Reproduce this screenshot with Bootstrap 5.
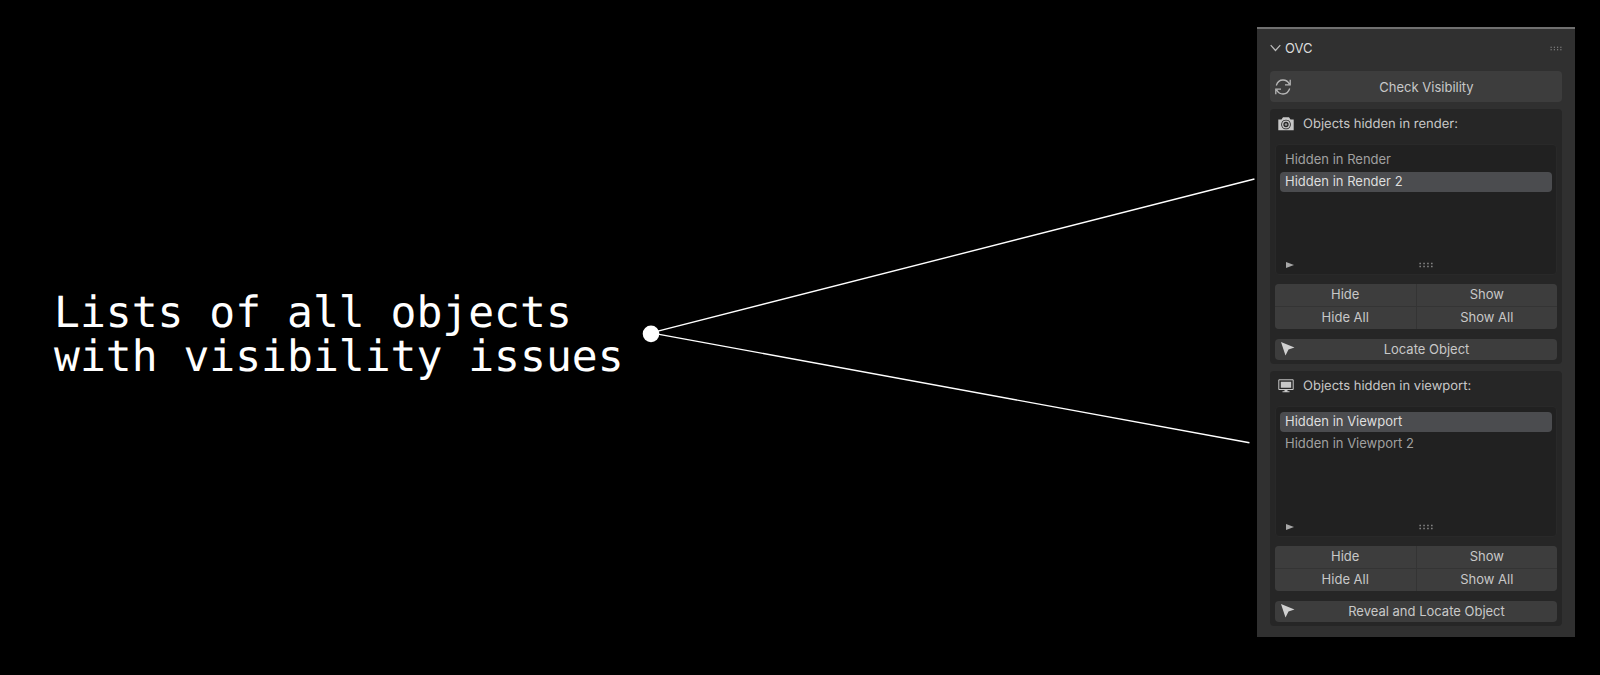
<!DOCTYPE html>
<html lang="en">
<head>
<meta charset="utf-8">
<meta name="viewport" content="width=device-width, initial-scale=1">
<title>OVC – Object Visibility Checker</title>
<link href="https://cdn.jsdelivr.net/npm/bootstrap@5.3.0/dist/css/bootstrap.min.css" rel="stylesheet">
<style>
  body { background: #000; color: #c8c8c8; font-family: Inter, "Liberation Sans", sans-serif; font-size: 13px; line-height: 20px; text-rendering: geometricPrecision; }
  .stage { padding: 27px 25px 38px 54px; }
  .headline { font-family: "DejaVu Sans Mono", monospace; font-size: 43px; line-height: 44px; color: #fff; padding-top: 6px; margin-right: 18px; }
  .pointer { min-width: 0; }
  .pointer svg { width: 100%; height: auto; }
  .ovc { width: 318px; background: #303030; border-top: 2px solid #707070; padding: 8px 13px 11px; }
  .ovc-head { height: 22px; margin-bottom: 12px; font-size: 13px; color: #dcdcdc; }
  .ovc-head button { color: inherit; font-size: inherit; line-height: inherit; gap: 4px; }
  .ovc .tool { background: #3d3d3d; color: #c8c8c8; border: 0; border-radius: 4px; padding: 0 0 1px; font-size: 13px; line-height: 20px; height: 21px; }
  .ovc .tool:hover { background: #484848; }
  .ovc .tool-lg { height: 31px; padding: 0; }
  .ovc .tool svg { width: 16px; margin-left: 5px; }
  .section-box { background: #262626; border-radius: 4px; padding: 5px 5px 4px; margin-top: 7px; }
  .section-title { font-size: 13px; line-height: 20px; margin-bottom: 10px; gap: 9px; padding-left: 3px; }
  .picker { background: #212121; border: 1px solid #292929; border-radius: 4px; height: 131px; padding: 5px 4px 0; }
  .picker .entry { background: transparent; color: #a0a0a0; border: 0; border-radius: 4px; padding: 0 5px 1px; height: 20px; line-height: 19px; margin-bottom: 2px; text-align: left; }
  .picker .entry.active { background: #4b4c4f; color: #dedede; }
  .picker-foot { display: grid; grid-template-columns: 8px 1fr; gap: 6px; height: 19px; padding-left: 6px; }
  .actions { display: grid; grid-template-columns: 1fr 1fr; gap: 1px; margin: 9px 0 10px; background: #343434; border-radius: 4px; overflow: hidden; }
  .ovc .actions .tool { height: 22px; border-radius: 0; padding-bottom: 2px; }
</style>
</head>
<body>
<svg class="d-none" aria-hidden="true">
  <symbol id="i-cursor" viewBox="0 0 16 16"><path d="M1 1 14.500 6.500 8.500 8.500 5.500 14.500Z" fill="#d0d0d0"/></symbol>
  <symbol id="i-play" viewBox="0 0 8 8"><path d="M0 1 8 4 0 7Z" fill="#a8a8a8"/></symbol>
  <symbol id="i-grip" viewBox="0 0 14 6"><path d="M.5 1.500h13M.5 4.500h13" stroke="#999" stroke-width="1.300" stroke-dasharray="1.300 2.600"/></symbol>
</svg>
<main class="stage d-flex align-items-center min-vh-100">
  <h1 class="headline fw-normal mb-0 text-nowrap flex-shrink-0">Lists of all objects<br>with visibility issues</h1>

  <div class="pointer flex-fill">
    <svg class="d-block" viewBox="0 0 616 310" role="img" aria-label="Points to both object lists">
      <path d="M613 2 9 156 608 266" fill="none" stroke="#fff" stroke-width="1.400"/>
      <circle cx="9" cy="157" r="8.300" fill="#fff"/>
    </svg>
  </div>

  <aside class="ovc flex-shrink-0">
    <div class="ovc-head d-flex align-items-center justify-content-between">
      <button type="button" class="btn border-0 p-0 d-flex align-items-center" aria-expanded="true">
        <svg width="11" height="8" viewBox="0 0 11 8"><path d="M.7 1.200 5.500 6.500 10.300 1.200" fill="none" stroke="#bbb" stroke-width="1.200"/></svg>
        OVC
      </button>
      <svg width="12" height="5"><use href="#i-grip"/></svg>
    </div>
    <button type="button" class="btn tool tool-lg w-100 d-flex align-items-center">
      <svg height="16" viewBox="0 0 16 16" fill="none" stroke="#b8b8b8" stroke-width="1.300"><path d="M1.300 6.500C2.400 3 5 1 8 1c2.800 0 5 1.400 6.300 4M15.200.8v5H10M14.700 9.500C13.600 13 11 15 8 15c-2.800 0-5-1.400-6.300-4M.8 15.200v-5H6"/></svg>
      <span class="flex-fill">Check Visibility</span>
    </button>

    <section class="section-box" aria-labelledby="t-render">
      <h2 class="section-title d-flex align-items-center fw-normal" id="t-render">
        <svg width="16" height="16" viewBox="0 0 16 16"><path fill="#c8c8c8" fill-rule="evenodd" d="M.3 3.500H3.500L5 1.300H11L12.500 3.500H15.700V14.300H.3ZM8 3.700a4.800 4.800 0 1 0 .01 0Z"/><circle cx="8" cy="8.500" r="3.300" fill="none" stroke="#c8c8c8" stroke-width="1.300"/><circle cx="8" cy="8.500" r="1.300" fill="#999"/></svg>
        Objects hidden in render:
      </h2>
      <div class="picker d-flex flex-column">
        <button type="button" class="entry">Hidden in Render</button>
        <button type="button" class="entry active">Hidden in Render 2</button>
        <div class="picker-foot align-items-center mt-auto">
          <svg width="8" height="8"><use href="#i-play"/></svg>
          <svg class="mx-auto" width="14" height="6"><use href="#i-grip"/></svg>
        </div>
      </div>
      <div class="actions">
        <button type="button" class="btn tool">Hide</button>
        <button type="button" class="btn tool">Show</button>
        <button type="button" class="btn tool">Hide All</button>
        <button type="button" class="btn tool">Show All</button>
      </div>
      <button type="button" class="btn tool w-100 d-flex align-items-center">
        <svg height="16"><use href="#i-cursor"/></svg>
        <span class="flex-fill">Locate Object</span>
      </button>
    </section>

    <section class="section-box" aria-labelledby="t-viewport">
      <h2 class="section-title d-flex align-items-center fw-normal" id="t-viewport">
        <svg width="16" height="16" viewBox="0 0 16 16"><path fill="none" stroke="#c8c8c8" d="M.8 1.800H15.200V11.500H.8Z"/><path fill="#c8c8c8" d="M2.800 3.700H13.200V9.700H2.800ZM6.500 11.500h3v1.800h2v1h-7v-1h2Z"/></svg>
        Objects hidden in viewport:
      </h2>
      <div class="picker d-flex flex-column">
        <button type="button" class="entry active">Hidden in Viewport</button>
        <button type="button" class="entry">Hidden in Viewport 2</button>
        <div class="picker-foot align-items-center mt-auto">
          <svg width="8" height="8"><use href="#i-play"/></svg>
          <svg class="mx-auto" width="14" height="6"><use href="#i-grip"/></svg>
        </div>
      </div>
      <div class="actions">
        <button type="button" class="btn tool">Hide</button>
        <button type="button" class="btn tool">Show</button>
        <button type="button" class="btn tool">Hide All</button>
        <button type="button" class="btn tool">Show All</button>
      </div>
      <button type="button" class="btn tool w-100 d-flex align-items-center">
        <svg height="16"><use href="#i-cursor"/></svg>
        <span class="flex-fill">Reveal and Locate Object</span>
      </button>
    </section>
  </aside>
</main>
<script src="https://cdn.jsdelivr.net/npm/bootstrap@5.3.0/dist/js/bootstrap.bundle.min.js"></script>
</body>
</html>
